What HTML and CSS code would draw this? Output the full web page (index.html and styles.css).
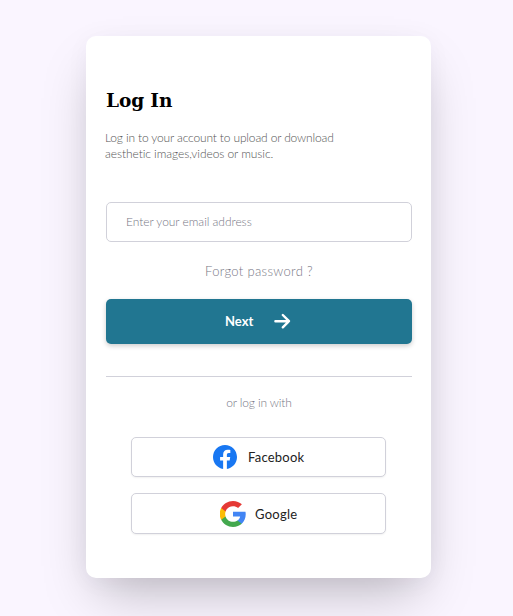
FILE: index.html
```
<!DOCTYPE html>
<html lang="en">
<head>
<meta charset="utf-8">
<title>Log In</title>
<link rel="stylesheet" href="styles.css">
</head>
<body>
<main class="card">
  <h1>Log In</h1>
  <p class="intro"><span class="line-one">Log in to your account to upload or download</span><br><span class="line-two">aesthetic images,videos or music.</span></p>
  <input class="email" type="email" placeholder="Enter your email address" aria-label="Email address">
  <a class="forgot">Forgot password ?</a>
  <button class="next"><span>Next</span>
    <svg width="18" height="18" viewBox="0 0 18 18" fill="none" stroke="#fff" stroke-width="2.4" stroke-linecap="round" stroke-linejoin="round"><path d="M2.4 9.2h13.4M9.8 3l6.2 6.2-6.2 6.1"/></svg>
  </button>
  <hr>
  <p class="or">or log in with</p>
  <button class="social facebook">
    <svg width="24" height="24" viewBox="0 0 24 24"><path fill="#1877f2" d="M24 12.07C24 5.4 18.63 0 12 0S0 5.4 0 12.07c0 6.03 4.39 11.02 10.13 11.93v-8.44H7.08v-3.49h3.05V9.41c0-3.02 1.79-4.69 4.53-4.69 1.31 0 2.68.24 2.68.24v2.97h-1.51c-1.49 0-1.96.93-1.96 1.89v2.25h3.33l-.53 3.49h-2.8V24C19.61 23.1 24 18.1 24 12.07z"/></svg>
    <span>Facebook</span>
  </button>
  <button class="social google">
    <svg width="26" height="26" viewBox="0 0 48 48"><path fill="#4285f4" d="M47.5 24.6c0-1.7-.2-3.3-.5-4.9H24v9.1h13.2c-.6 3-2.3 5.6-4.9 7.3v6.1h7.9c4.6-4.2 7.3-10.5 7.3-17.6z"/><path fill="#43a84e" d="M24 48c6.6 0 12.2-2.1 16.2-5.8l-7.9-6.1c-2.1 1.4-5 2.3-8.3 2.3-6.4 0-11.8-4.2-13.7-10H2.2v6.3C6.2 42.7 14.5 48 24 48z"/><path fill="#fbbc05" d="M10.3 28.4a14.5 14.5 0 0 1 0-9.1V13H2.2a24 24 0 0 0 0 21.7z"/><path fill="#e53935" d="M24 9.5c3.6 0 6.8 1.2 9.4 3.6l7-7C36.2 2.3 30.6 0 24 0 14.5 0 6.2 5.3 2.2 13l8.1 6.3c1.9-5.7 7.3-9.8 13.7-9.8z"/></svg>
    <span>Google</span>
  </button>
</main>
</body>
</html>
```
FILE: styles.css
```
* { box-sizing: border-box; }
body {
  margin: 0;
  min-height: 616px;
  padding: 36px 82px 38px 86px;
  background: #faf5ff;
  font-family: Lato, "Liberation Sans", sans-serif;
  overflow: hidden;
}
.card {
  display: flex;
  flex-direction: column;
  width: 345px;
  height: 542px;
  padding: 53px 19px 0 20px;
  border-radius: 10px;
  background: #fff;
  box-shadow: 0 25px 50px -12px rgba(0, 0, 0, .25), 0 4px 24px rgba(40, 30, 90, .04);
}
h1 {
  margin: 0;
  font: bold 18.5px/24px "DejaVu Serif", serif;
  letter-spacing: -.1px;
  color: #000;
}
.intro {
  margin: 17px 0 0 -1px;
  font-size: 12px;
  line-height: 16px;
  font-weight: 300;
  color: #555;
}
.line-one { letter-spacing: -.15px; }
.line-two { letter-spacing: -.07px; }
.email {
  width: 100%;
  height: 40px;
  margin: 40px 0 0;
  padding: 0 19px 2px;
  border: 1px solid #d1d1da;
  border-radius: 5px;
  background: #fff;
  font: 300 12px Lato, sans-serif;
  letter-spacing: -.04px;
  outline: none;
}
.email::placeholder { color: #777785; opacity: 1; }
.forgot {
  margin-top: 20px;
  line-height: 18px;
  font-size: 13px;
  font-weight: 300;
  letter-spacing: .33px;
  text-align: center;
  color: #777785;
}
.next {
  display: flex;
  align-items: center;
  width: 100%;
  height: 45px;
  flex: none;
  margin: 19px 0 0;
  padding: 0 0 1px 119px;
  gap: 20px;
  border: 0;
  border-radius: 5px;
  background: #217691;
  box-shadow: 0 2px 5px rgba(0, 0, 0, .2);
  font: bold 13px Lato, sans-serif;
  color: #fff;
}
hr {
  width: 100%;
  height: 1px;
  margin: 32px 0 0;
  border: 0;
  background: #d1d1da;
}
.or {
  margin: 18px 0 0;
  line-height: 16px;
  font-size: 12px;
  font-weight: 300;
  letter-spacing: -.15px;
  text-align: center;
  color: #777785;
}
.social {
  display: flex;
  align-items: center;
  width: 255px;
  height: 40px;
  flex: none;
  margin: 26px 0 0 25px;
  padding: 0 0 0 81px;
  border: 1px solid #d1d1da;
  border-radius: 5px;
  background: #fff;
  box-shadow: 0 1px 2px rgba(0, 0, 0, .06);
  font: 13px Lato, sans-serif;
  letter-spacing: .25px;
  color: #222;
  gap: 11px;
}
.google {
  height: 41px;
  margin-top: 16px;
  padding-left: 88px;
  gap: 9px;
}
```
